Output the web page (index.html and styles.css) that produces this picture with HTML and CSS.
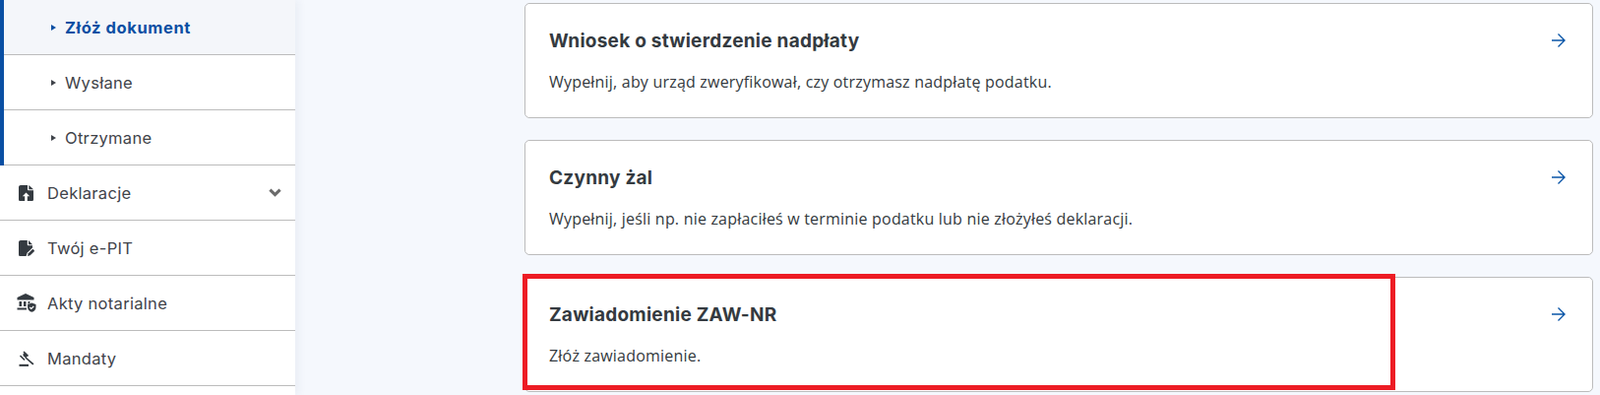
FILE: index.html
```html
<!DOCTYPE html>
<html lang="pl">
<head>
<meta charset="utf-8">
<title>Złóż dokument</title>
<link rel="stylesheet" href="styles.css">
</head>
<body>
<div class="page">
  <nav class="sidebar">
    <div class="group">
      <a class="row sub active"><span class="tri"></span><span>Złóż dokument</span></a>
      <a class="row sub"><span class="tri"></span><span>Wysłane</span></a>
      <a class="row sub"><span class="tri"></span><span>Otrzymane</span></a>
    </div>
    <a class="row top">
      <svg class="ico" viewBox="0 0 16 16"><path fill-rule="evenodd" d="M2 0H9v4.200c0 .6.500 1 1 1h5V14.400c0 .9-.7 1.600-1.600 1.600H1.600C.7 16 0 15.300 0 14.400V2C0 .9.900 0 2 0ZM10.300 0l4.700 4.200h-4.700ZM7.500 7.500 3.800 11.200h2.400V16h2.600v-4.800h2.400Z"/></svg>
      <span class="label">Deklaracje</span>
      <svg class="chev" viewBox="0 0 12 8"><path d="M1.300 1.300 6 6l4.700-4.700" fill="none" stroke="currentColor" stroke-width="2.800"/></svg>
    </a>
    <a class="row top">
      <svg class="ico" viewBox="0 0 16 16"><path d="M2 0H8.800v4.200c0 .6.500 1 1 1H14v2.200L8.600 12.800 7.600 16H1.600C.7 16 0 15.300 0 14.400V2C0 .9.900 0 2 0ZM10 0l4 4.200h-4Z"/><path d="M9 16l.7-2.700 4.600-4.500 2 2-4.600 4.500Z"/></svg>
      <span class="label">Twój e-PIT</span>
    </a>
    <a class="row top">
      <svg class="ico wide" viewBox="0 0 20 20"><path d="M9 0 17.500 4V6.500H.5V4ZM2.500 8H5v5H2.500ZM7 8H9.500v5H7ZM11.500 8h2v1.500a5 5 0 0 0-2 1.500ZM.5 14.500H10V16.500H.5Z"/><path d="M15.300 9.500l4.200 1.500v3c0 2.300-1.800 4.300-4.200 4.800-2.400-.5-4.200-2.500-4.200-4.800v-3Z"/><path d="M13.300 14l1.500 1.500 2.500-2.700" fill="none" stroke="#fff" stroke-width="1.200"/></svg>
      <span class="label">Akty notarialne</span>
    </a>
    <a class="row top">
      <svg class="ico" viewBox="0 0 16 16"><path d="M5 1l4.500 4.500M1.500 5 6 9.500" fill="none" stroke="#343a40" stroke-width="1.600"/><path d="M4.500 3.200l2 -1.500 3 3-2.200 2.800-2.800-2.300ZM7.500 6.500l8 6.700-1.300 1.400-7.700-7.100Z"/><path d="M.5 13.800H10V15.900H.5Z"/></svg>
      <span class="label">Mandaty</span>
    </a>
  </nav>
  <main class="main">
    <a class="card">
      <div class="card-head">
        <h2>Wniosek o stwierdzenie nadpłaty</h2>
        <svg class="arrow" viewBox="0 0 14 14"><path d="M0 7h13M6.500.5 13 7l-6.500 6.500" fill="none" stroke="currentColor" stroke-width="1.400"/></svg>
      </div>
      <p>Wypełnij, aby urząd zweryfikował, czy otrzymasz nadpłatę podatku.</p>
    </a>
    <a class="card">
      <div class="card-head">
        <h2>Czynny żal</h2>
        <svg class="arrow" viewBox="0 0 14 14"><path d="M0 7h13M6.500.5 13 7l-6.500 6.500" fill="none" stroke="currentColor" stroke-width="1.400"/></svg>
      </div>
      <p>Wypełnij, jeśli np. nie zapłaciłeś w terminie podatku lub nie złożyłeś deklaracji.</p>
    </a>
    <a class="card marked">
      <div class="card-head">
        <h2>Zawiadomienie ZAW-NR</h2>
        <svg class="arrow" viewBox="0 0 14 14"><path d="M0 7h13M6.500.5 13 7l-6.500 6.500" fill="none" stroke="currentColor" stroke-width="1.400"/></svg>
      </div>
      <p>Złóż zawiadomienie.</p>
      <span class="highlight"></span>
    </a>
  </main>
</div>
</body>
</html>
```
FILE: styles.css
```css
* { box-sizing: border-box; }
html, body { margin: 0; height: 100%; overflow: hidden; }
body {
  background: #f5f8fd;
  color: #343a40;
  font-family: "Inter", "Liberation Sans", sans-serif;
}
.page { display: flex; width: 1626px; height: 401px; }
.sidebar {
  flex: 0 0 300px;
  height: 401px;
  background: #fff;
  box-shadow: 4px 0 8px rgba(40, 60, 100, 0.05);
}
.group { border-left: 4px solid #0a4fa3; }
.row {
  display: flex;
  align-items: center;
  height: 56px;
  border-bottom: 1px solid #bcbcbc;
  font-size: 16.500px;
  letter-spacing: 0.3px;
  color: #3f434a;
}
.sub { padding-left: 47px; }
.active { background: #f4f6fa; color: #0a4fa3; font-weight: 700; letter-spacing: 0.6px; }
.tri {
  width: 0;
  height: 0;
  margin: 0 9px 0 1px;
  border-left: 5px solid currentColor;
  border-top: 3.5px solid transparent;
  border-bottom: 3.5px solid transparent;
}
.top { padding-left: 19px; }
.ico { width: 16px; height: 16px; fill: #343a40; flex: none; margin-right: 13px; }
.ico.wide { width: 20px; height: 20px; margin-left: -2px; margin-right: 11px; }
.label { flex: 1; }
.chev { width: 13px; height: 9px; color: #6b6b6b; margin-right: 14px; }
.main {
  flex: 1;
  display: flex;
  flex-direction: column;
  gap: 22px;
  padding: 3px 7px 0 233px;
}
.card {
  position: relative;
  display: block;
  height: 117px;
  padding: 23px 24px 0;
  flex: none;
  background: #fff;
  border: 1px solid #bcbcbc;
  border-radius: 5px;
}
.card-head {
  display: flex;
  justify-content: space-between;
  align-items: center;
  height: 28px;
}
.card h2 {
  margin: 0;
  font-size: 19px;
  font-weight: 700;
  letter-spacing: 0.25px;
  color: #343a40;
}
.arrow { width: 14px; height: 14px; color: #0a55a8; margin-right: 3px; }
.card p {
  margin: 16px 0 0;
  font-family: "Open Sans", "Liberation Sans", sans-serif;
  font-size: 16px;
  line-height: 24px;
  letter-spacing: 0.2px;
  color: #343a40;
}
.highlight {
  position: absolute;
  left: -3px;
  top: -4px;
  width: 887px;
  height: 118px;
  border: 5px solid #ed1c24;
}
```
